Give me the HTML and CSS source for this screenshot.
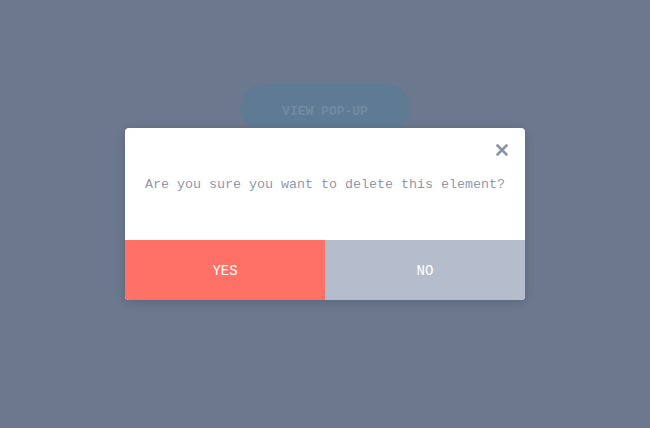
FILE: index.html
```html
<!DOCTYPE html>
<html lang="en">
<head>
    <meta charset="UTF-8">
    <title>Pop-up</title>
    <link rel="stylesheet" href="styles.css">
</head>
<body>
    <div class="page">
        <button class="open-btn">VIEW POP-UP</button>
    </div>

    <div class="overlay">
        <div class="popup">
            <div class="popup-top">
                <span class="close">
                    <svg width="12" height="12" viewBox="0 0 12 12">
                        <path d="M1.5 1.5 L10.5 10.5 M10.5 1.5 L1.5 10.5" stroke="#8a93a8" stroke-width="2.6" stroke-linecap="round"/>
                    </svg>
                </span>
            </div>
            <p class="message">Are you sure you want to delete this element?</p>
            <div class="actions">
                <button class="yes">YES</button>
                <button class="no">NO</button>
            </div>
        </div>
    </div>
</body>
</html>
```

FILE: styles.css
```css
body {
    margin: 0;
    background-color: #6c788d;
    font-family: "Liberation Mono", "DejaVu Sans Mono", monospace;
    height: 428px;
    overflow: hidden;
}

.page {
    display: flex;
    justify-content: center;
    padding-top: 84px;
}

.open-btn {
    width: 170px;
    height: 48px;
    padding-top: 7px;
    border: none;
    border-radius: 24px;
    background-color: #5f7b94;
    color: #718aa0;
    font-family: "Liberation Mono", monospace;
    font-weight: bold;
    font-size: 13px;
}

.overlay {
    position: absolute;
    top: 0;
    left: 0;
    width: 100%;
    height: 100%;
    display: flex;
    justify-content: center;
    padding-top: 128px;
    box-sizing: border-box;
}

.popup {
    width: 400px;
    height: 172px;
    background-color: #ffffff;
    border-radius: 4px;
    overflow: hidden;
    box-shadow: 0 2px 8px rgba(40, 50, 70, 0.25);
    display: flex;
    flex-direction: column;
}

.popup-top {
    display: flex;
    justify-content: flex-end;
    padding: 15px 17px 0 0;
    height: 27px;
    box-sizing: border-box;
}

.close {
    width: 12px;
    height: 12px;
}

.message {
    margin: 0;
    height: 85px;
    padding-top: 22px;
    box-sizing: border-box;
    text-align: center;
    font-size: 13.33px;
    color: #8f98a8;
}

.actions {
    display: flex;
    height: 60px;
}

.actions button {
    flex: 1;
    border: none;
    padding-top: 2px;
    color: #ffffff;
    font-family: "Liberation Mono", monospace;
    font-size: 14px;
}

.yes {
    background-color: #ff7066;
}

.no {
    background-color: #b5bccc;
}
```
